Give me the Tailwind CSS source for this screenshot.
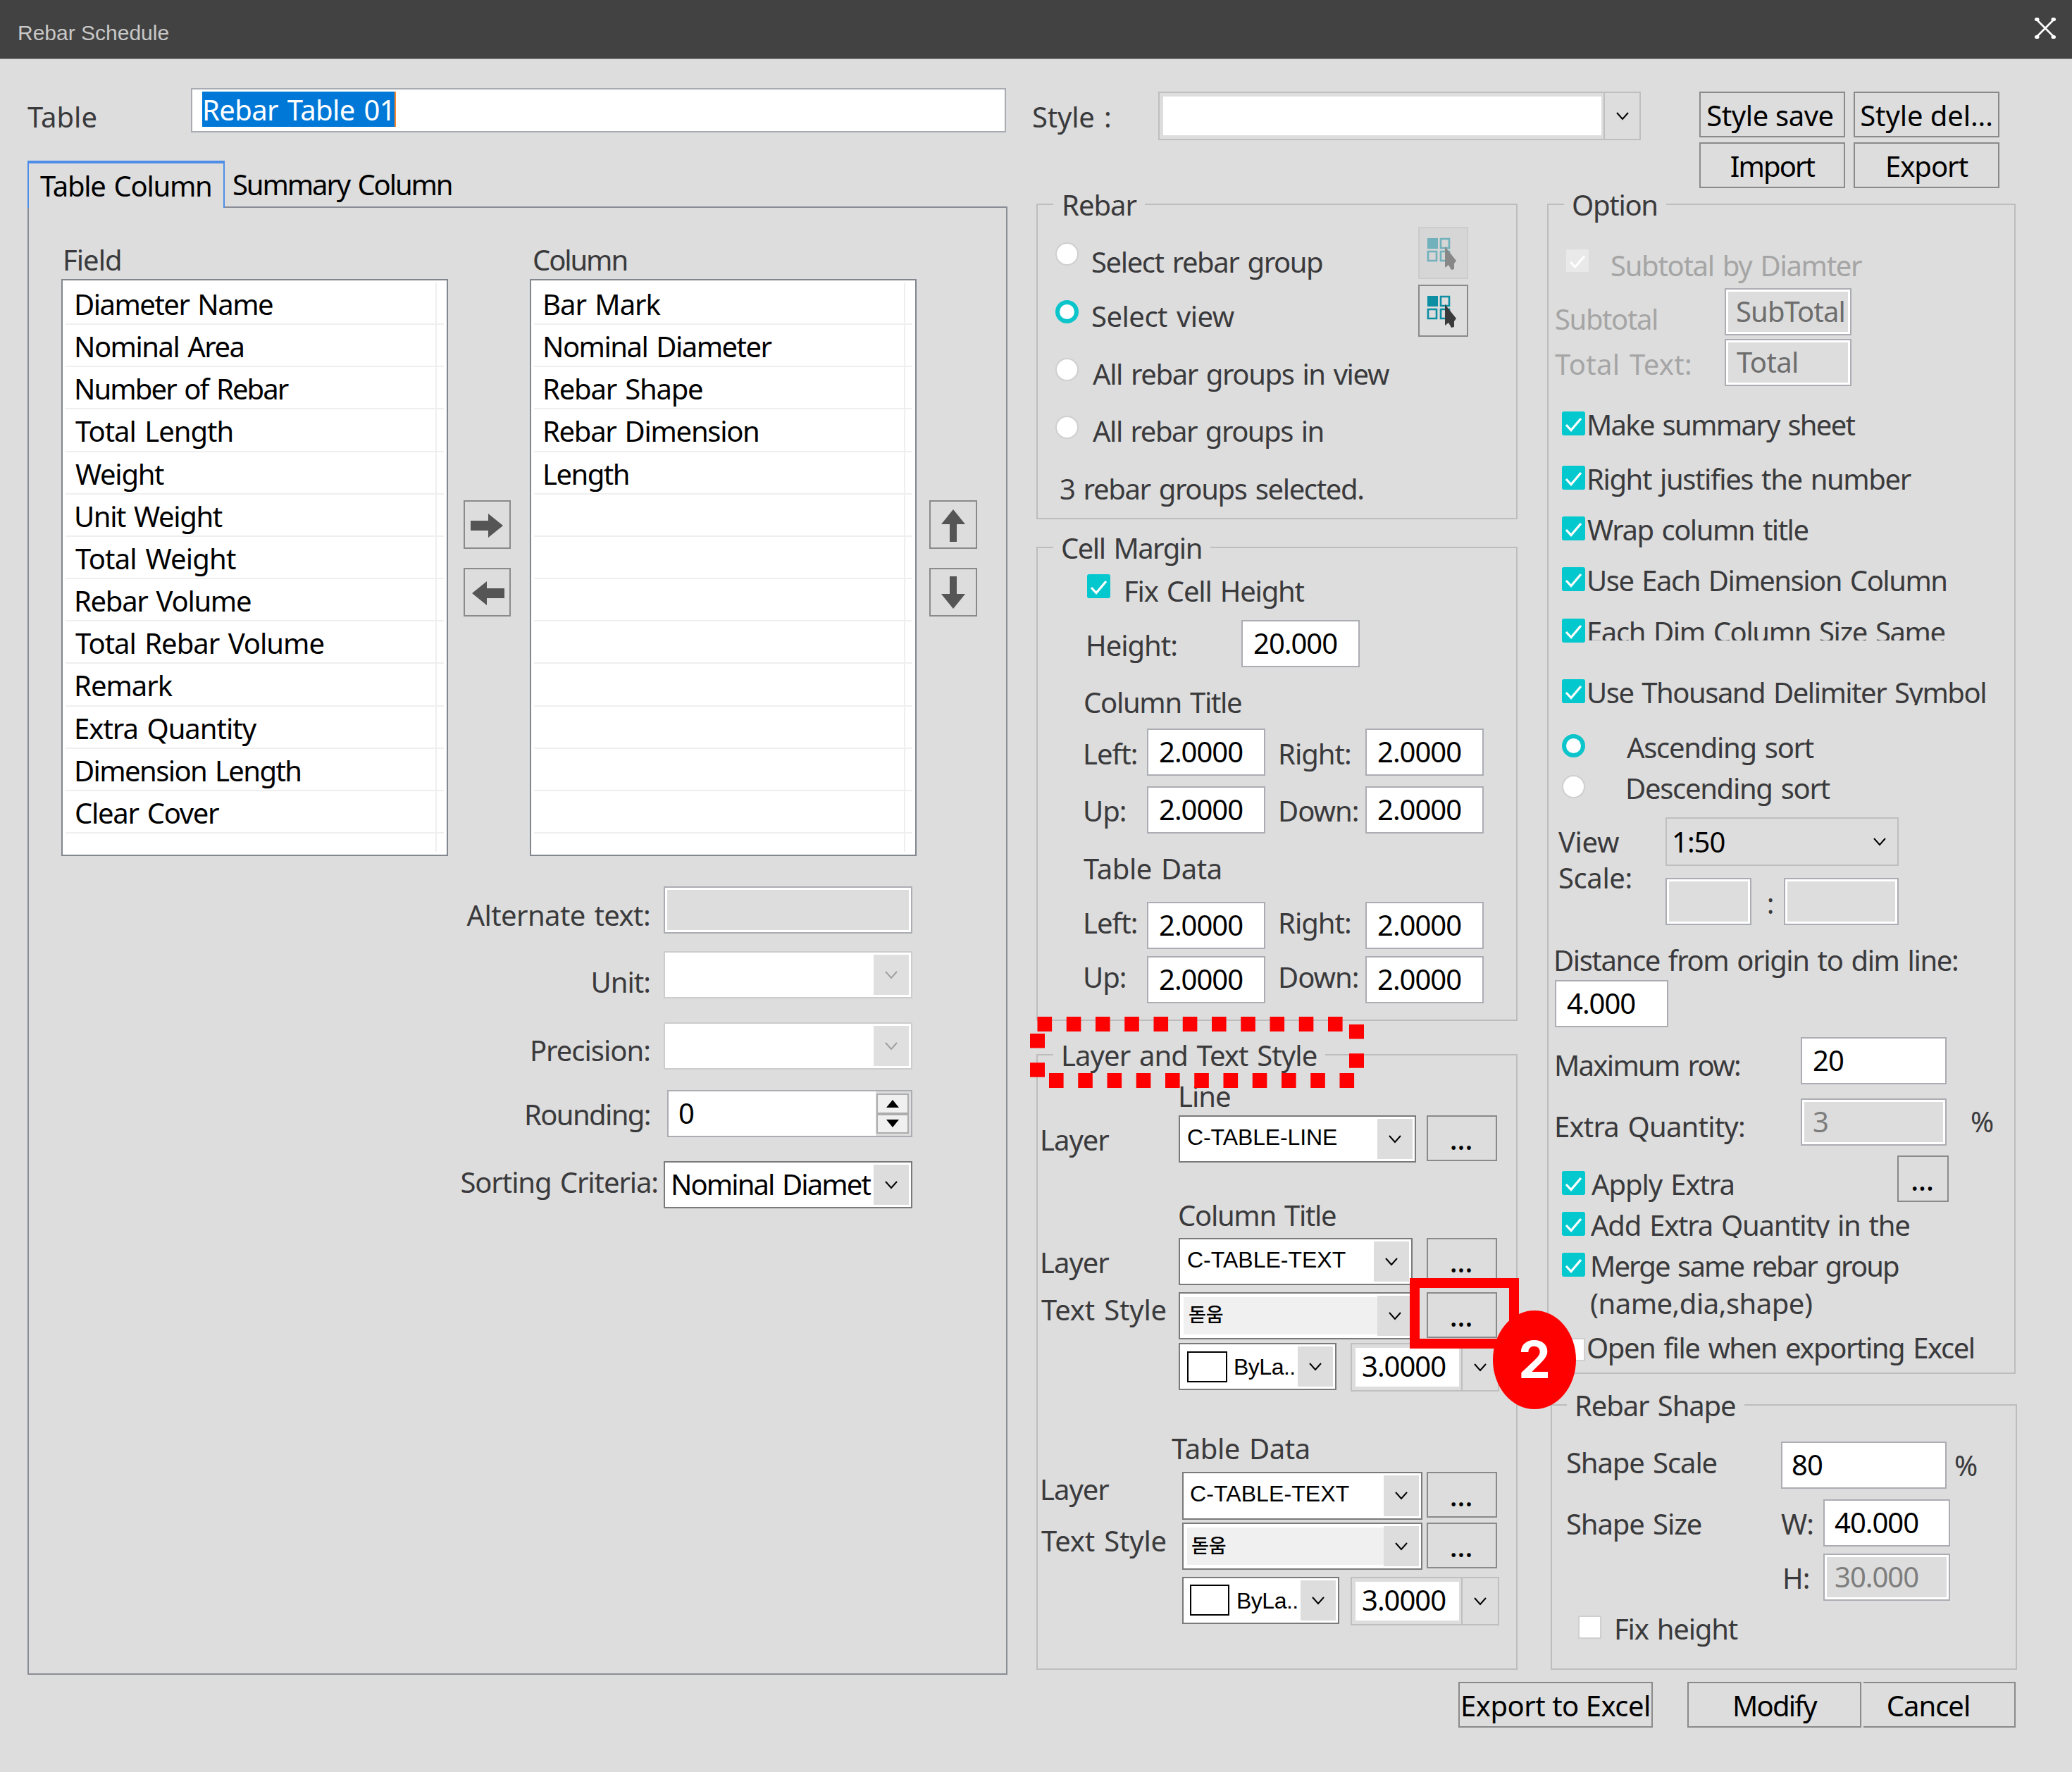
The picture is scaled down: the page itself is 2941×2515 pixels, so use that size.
<!DOCTYPE html>
<html lang="en">
<head>
  <meta charset="UTF-8">
  <meta name="viewport" content="width=device-width, initial-scale=1.0">
  <title>Rebar Schedule</title>
  <script src="https://cdn.jsdelivr.net/npm/@tailwindcss/browser@4"></script>
</head>

<body class="relative w-[2941px] h-[2515px] overflow-hidden bg-[#dddddd] font-['Noto_Sans','Noto_Sans_CJK_KR',sans-serif] text-[40px] leading-[50px] tracking-[-1px] [word-spacing:3px] text-[#3a3a3c] whitespace-nowrap">

  <!-- Shared icons -->
  <svg class="hidden">
    <symbol id="check" viewBox="0 0 33 34"><path d="M6 19l7 7.5L27 10" fill="none" stroke="#fff" stroke-width="3.2"/></symbol>
    <symbol id="chevron" viewBox="0 0 18 12"><path d="M1 1l8 9 8-9" fill="none" stroke="currentColor" stroke-width="2"/></symbol>
    <symbol id="pick" viewBox="0 0 71 74">
      <path d="M13 16h15v15H13z" fill="#0c8ea3"/>
      <path d="M32 17h12v13H32zM14 35h12v13H14zM32 35h12v13H32z" fill="none" stroke="#0c8ea3" stroke-width="2.6"/>
      <path d="M38 28v30l5-4 4 7 4-1v-8l3-4z" fill="#3a3a3a"/>
    </symbol>
  </svg>

  <!-- Title bar -->
  <header class="flex justify-between h-[84px] bg-[#424242] border-b border-[#8a8a8a]">
    <h1 class="ml-[25px] mt-[22px] font-['Liberation_Sans',sans-serif] text-[30px] tracking-[0px] [word-spacing:0px] text-[#c8c8c8]">Rebar Schedule</h1>
    <svg class="w-[32px] h-[32px] mt-[24px] mr-[22px]" viewBox="0 0 32 32" fill="none" stroke="#fff" stroke-width="2.6" stroke-linecap="round">
      <path d="M4 4l24 24M28 4L4 28"/>
      <path d="M3.500 3.500h1.500M27 3.500h1.500M3.500 28.500h1.500M27 28.500h1.500" stroke-width="5"/>
    </svg>
  </header>

  <div class="flex">

    <!-- Left side -->
    <section class="w-[1445px] shrink-0">
      <div class="flex h-[144px]">
        <label class="w-[271px] pl-[39px] mt-[57px] tracking-[0px]">Table</label>
        <div class="mt-[41px] w-[1157px] h-[63px] bg-white border-2 border-[#a9abb3]">
          <span class="block ml-[14px] mt-[3px] w-[275px] h-[50px] leading-[52px] tracking-[-0.6px] bg-[#0078d7] text-white border-r-2 border-[#ff8728]">Rebar Table 01</span>
        </div>
      </div>

      <!-- Tabs -->
      <div class="flex h-[65px] ml-[39px] text-black">
        <div class="relative z-10 w-[280px] h-[67px] bg-[#dddddd] border-t-4 border-x-2 border-[#4f8ee8] pl-[16px] pt-[7px] tracking-[-1.3px]">Table Column</div>
        <div class="pl-[11px] pt-[9px] tracking-[-2.1px]">Summary Column</div>
      </div>

      <div class="ml-[39px] w-[1391px] h-[2084px] border-2 border-[#8a8d96]">
        <div class="flex h-[101px] pl-[48px]">
          <span class="w-[667px] mt-[49px]">Field</span>
          <span class="mt-[49px] tracking-[-2.1px]">Column</span>
        </div>

        <!-- Field / column lists -->
        <div class="flex h-[819px] pl-[46px] text-black">
          <ul class="w-[549px] bg-white border-2 border-[#82868f] px-[4px] pt-[3px] leading-[62px]">
            <li class="h-[60.170px] border-b-2 border-[#efefef]"><div class="w-[527px] h-full pl-[12px] border-r-2 border-[#efefef] tracking-[-1.5px]">Diameter Name</div></li>
            <li class="h-[60.170px] border-b-2 border-[#efefef]"><div class="w-[527px] h-full pl-[12px] border-r-2 border-[#efefef] tracking-[-1.5px]">Nominal Area</div></li>
            <li class="h-[60.170px] border-b-2 border-[#efefef]"><div class="w-[527px] h-full pl-[12px] border-r-2 border-[#efefef] tracking-[-1.9px]">Number of Rebar</div></li>
            <li class="h-[60.170px] border-b-2 border-[#efefef]"><div class="w-[527px] h-full pl-[14px] border-r-2 border-[#efefef]">Total Length</div></li>
            <li class="h-[60.170px] border-b-2 border-[#efefef]"><div class="w-[527px] h-full pl-[14px] border-r-2 border-[#efefef] tracking-[-1.3px]">Weight</div></li>
            <li class="h-[60.170px] border-b-2 border-[#efefef]"><div class="w-[527px] h-full pl-[12px] border-r-2 border-[#efefef] tracking-[-1.4px]">Unit Weight</div></li>
            <li class="h-[60.170px] border-b-2 border-[#efefef]"><div class="w-[527px] h-full pl-[14px] border-r-2 border-[#efefef] tracking-[-0.8px]">Total Weight</div></li>
            <li class="h-[60.170px] border-b-2 border-[#efefef]"><div class="w-[527px] h-full pl-[12px] border-r-2 border-[#efefef] tracking-[-1.3px]">Rebar Volume</div></li>
            <li class="h-[60.170px] border-b-2 border-[#efefef]"><div class="w-[527px] h-full pl-[14px] border-r-2 border-[#efefef]">Total Rebar Volume</div></li>
            <li class="h-[60.170px] border-b-2 border-[#efefef]"><div class="w-[527px] h-full pl-[12px] border-r-2 border-[#efefef]">Remark</div></li>
            <li class="h-[60.170px] border-b-2 border-[#efefef]"><div class="w-[527px] h-full pl-[12px] border-r-2 border-[#efefef]">Extra Quantity</div></li>
            <li class="h-[60.170px] border-b-2 border-[#efefef]"><div class="w-[527px] h-full pl-[12px] border-r-2 border-[#efefef] tracking-[-1.6px]">Dimension Length</div></li>
            <li class="h-[60.170px] border-b-2 border-[#efefef]"><div class="w-[527px] h-full pl-[13px] border-r-2 border-[#efefef] tracking-[-1.3px]">Clear Cover</div></li>
            <li class="h-[26px]"><div class="w-[527px] h-full border-r-2 border-[#efefef]"></div></li>
          </ul>
          <div class="flex flex-col gap-[27px] ml-[22px] mt-[314px] w-[67px]">
            <button class="flex items-center justify-center h-[69px] pr-[2px] pt-[2px] border-2 border-[#8a8a8a]">
              <svg class="w-[46px] h-[34px]" viewBox="0 0 46 34"><path d="M0 10h25V0l21 17-21 17V24H0z" fill="#555"/></svg>
            </button>
            <button class="flex items-center justify-center h-[69px] pl-[3px] pt-[2px] border-2 border-[#8a8a8a]">
              <svg class="w-[46px] h-[34px]" viewBox="0 0 46 34"><path d="M46 10H21V0L0 17l21 17V24h25z" fill="#555"/></svg>
            </button>
          </div>
          <ul class="ml-[27px] w-[549px] bg-white border-2 border-[#82868f] px-[4px] pt-[3px] leading-[62px]">
            <li class="h-[60.170px] border-b-2 border-[#efefef]"><div class="w-[527px] h-full pl-[12px] border-r-2 border-[#efefef]">Bar Mark</div></li>
            <li class="h-[60.170px] border-b-2 border-[#efefef]"><div class="w-[527px] h-full pl-[12px] border-r-2 border-[#efefef] tracking-[-1.5px]">Nominal Diameter</div></li>
            <li class="h-[60.170px] border-b-2 border-[#efefef]"><div class="w-[527px] h-full pl-[12px] border-r-2 border-[#efefef] tracking-[-1.2px]">Rebar Shape</div></li>
            <li class="h-[60.170px] border-b-2 border-[#efefef]"><div class="w-[527px] h-full pl-[12px] border-r-2 border-[#efefef] tracking-[-1.3px]">Rebar Dimension</div></li>
            <li class="h-[60.170px] border-b-2 border-[#efefef]"><div class="w-[527px] h-full pl-[12px] border-r-2 border-[#efefef] tracking-[-1.5px]">Length</div></li>
            <li class="h-[60.170px] border-b-2 border-[#efefef]"><div class="w-[527px] h-full border-r-2 border-[#efefef]"></div></li>
            <li class="h-[60.170px] border-b-2 border-[#efefef]"><div class="w-[527px] h-full border-r-2 border-[#efefef]"></div></li>
            <li class="h-[60.170px] border-b-2 border-[#efefef]"><div class="w-[527px] h-full border-r-2 border-[#efefef]"></div></li>
            <li class="h-[60.170px] border-b-2 border-[#efefef]"><div class="w-[527px] h-full border-r-2 border-[#efefef]"></div></li>
            <li class="h-[60.170px] border-b-2 border-[#efefef]"><div class="w-[527px] h-full border-r-2 border-[#efefef]"></div></li>
            <li class="h-[60.170px] border-b-2 border-[#efefef]"><div class="w-[527px] h-full border-r-2 border-[#efefef]"></div></li>
            <li class="h-[60.170px] border-b-2 border-[#efefef]"><div class="w-[527px] h-full border-r-2 border-[#efefef]"></div></li>
            <li class="h-[60.170px] border-b-2 border-[#efefef]"><div class="w-[527px] h-full border-r-2 border-[#efefef]"></div></li>
            <li class="h-[26px]"><div class="w-[527px] h-full border-r-2 border-[#efefef]"></div></li>
          </ul>
          <div class="flex flex-col gap-[27px] ml-[18px] mt-[314px] w-[68px]">
            <button class="flex items-center justify-center h-[69px] pt-[2px] border-2 border-[#8a8a8a]">
              <svg class="w-[34px] h-[46px]" viewBox="0 0 34 46"><path d="M12 46V21H0L17 0l17 21H22v25z" fill="#555"/></svg>
            </button>
            <button class="flex items-center justify-center h-[69px] border-2 border-[#8a8a8a]">
              <svg class="w-[34px] h-[46px]" viewBox="0 0 34 46"><path d="M12 0v25H0l17 21 17-21H22V0z" fill="#555"/></svg>
            </button>
          </div>
        </div>

        <!-- Column settings -->
        <div class="flex h-[110px]">
          <label class="w-[882px] mt-[59px] text-right tracking-[-0.6px]">Alternate text:</label>
          <div class="ml-[19px] mt-[43px] w-[353px] h-[67px] border-2 border-[#abadb3] shadow-[inset_0_0_0_3px_white]"></div>
        </div>
        <div class="flex h-[92px]">
          <label class="w-[882px] mt-[44px] text-right">Unit:</label>
          <div class="flex justify-end ml-[19px] mt-[25px] w-[353px] h-[67px] p-[3px] bg-white border-2 border-[#cccccc]">
            <span class="flex items-center justify-center w-[50px] bg-[#dfdfdf] text-[#a0a0a0]"><svg class="w-[18px] h-[12px]"><use href="#chevron"/></svg></span>
          </div>
        </div>
        <div class="flex h-[101px]">
          <label class="w-[882px] mt-[49px] text-right">Precision:</label>
          <div class="flex justify-end ml-[19px] mt-[34px] w-[353px] h-[67px] p-[3px] bg-white border-2 border-[#cccccc]">
            <span class="flex items-center justify-center w-[50px] bg-[#dfdfdf] text-[#a0a0a0]"><svg class="w-[18px] h-[12px]"><use href="#chevron"/></svg></span>
          </div>
        </div>
        <div class="flex h-[96px]">
          <label class="w-[882px] mt-[39px] text-right tracking-[-1.6px]">Rounding:</label>
          <div class="flex justify-between ml-[24px] mt-[29px] w-[348px] h-[67px] pl-[14px] bg-white border-2 border-[#abadb3] leading-[62px] text-black">
            0
            <span class="flex flex-col w-[50px] py-[3px] pr-[3px] pl-[1px] bg-[#dddddd]">
              <span class="flex flex-1 items-center justify-center border-2 border-[#adadad] bg-[#f0f0f0]"><svg class="w-[18px] h-[11px]" viewBox="0 0 18 11"><path d="M9 0l9 11H0z"/></svg></span>
              <span class="flex flex-1 items-center justify-center border-2 border-[#adadad] bg-[#f0f0f0]"><svg class="w-[18px] h-[11px]" viewBox="0 0 18 11"><path d="M9 11l9-11H0z"/></svg></span>
            </span>
          </div>
        </div>
        <div class="flex h-[101px]">
          <label class="w-[893px] mt-[39px] text-right tracking-[-1.1px]">Sorting Criteria:</label>
          <div class="flex ml-[8px] mt-[34px] w-[353px] h-[67px] py-[3px] pr-[3px] bg-white border-2 border-[#7a7a7a] text-black">
            <span class="w-[296px] pl-[8px] -mt-[3px] leading-[62px] tracking-[-1.9px]">Nominal Diamet</span>
            <span class="flex items-center justify-center w-[50px] bg-[#dddddd]"><svg class="w-[18px] h-[12px]"><use href="#chevron"/></svg></span>
          </div>
        </div>
      </div>
    </section>

    <!-- Right side -->
    <section class="w-[1496px] shrink-0">
      <div class="flex items-start h-[182px]">
        <label class="w-[199px] pl-[20px] mt-[57px] tracking-[-0.2px]">Style :</label>
        <div class="flex mt-[46px] w-[685px] h-[69px] border-2 border-[#bfbfbf]">
          <span class="w-[630px] border-[5px] border-[#dddddd] border-r-[3px] bg-white"></span>
          <span class="flex flex-1 items-center justify-center border-l-2 border-[#bfbfbf] text-black"><svg class="w-[18px] h-[12px]"><use href="#chevron"/></svg></span>
        </div>
        <div class="grid grid-cols-[207px_207px] gap-x-[12px] gap-y-[7px] ml-[83px] mt-[46px] text-black">
          <button class="h-[65px] border-2 border-[#8a8a8a] pt-[2px] pr-[6px] tracking-[-0.4px]">Style save</button>
          <button class="h-[65px] border-2 border-[#8a8a8a] pt-[2px] tracking-[-0.1px]">Style del...</button>
          <button class="h-[65px] border-2 border-[#8a8a8a] pt-[2px] tracking-[-1.9px]">Import</button>
          <button class="h-[65px] border-2 border-[#8a8a8a] pt-[2px]">Export</button>
        </div>
      </div>

      <div class="flex items-start">
        <div class="ml-[26px] w-[683px]">

          <!-- Rebar -->
          <fieldset class="h-[471px] border-2 border-[#bdbdbd]">
            <legend class="h-[48px] ml-[22px] pl-[12px] pr-[12px]">Rebar</legend>
            <div class="flex">
              <div class="w-[540px]">
                <div class="flex h-[82px] pl-[25px]"><i class="w-[33px] h-[33px] mt-[30px] rounded-full bg-white border-2 border-[#cfcfcf]"></i><span class="ml-[18px] mt-[33px] tracking-[-1.4px]">Select rebar group</span></div>
                <div class="flex h-[82px] pl-[25px]"><i class="w-[33px] h-[33px] mt-[30px] rounded-full bg-white border-[6px] border-[#0bc5cb]"></i><span class="ml-[18px] mt-[28px] tracking-[-0.5px]">Select view</span></div>
                <div class="flex h-[82px] pl-[25px]"><i class="w-[33px] h-[33px] mt-[30px] rounded-full bg-white border-2 border-[#cfcfcf]"></i><span class="ml-[20px] mt-[28px] tracking-[-1.4px]">All rebar groups in view</span></div>
                <div class="flex h-[82px] pl-[25px]"><i class="w-[33px] h-[33px] mt-[30px] rounded-full bg-white border-2 border-[#cfcfcf]"></i><span class="ml-[20px] mt-[27px] tracking-[-1.5px]">All rebar groups in</span></div>
                <p class="ml-[31px] mt-[27px] tracking-[-1.35px]">3 rebar groups selected.</p>
              </div>
              <div class="flex flex-col gap-[8px] mt-[8px] w-[71px]">
                <button class="h-[74px] bg-[#d6d6d6] border-2 border-[#cccccc]"><svg class="-m-[2px] w-[71px] h-[74px] opacity-50"><use href="#pick"/></svg></button>
                <button class="h-[74px] border-2 border-[#8a8a8a]"><svg class="-m-[2px] w-[71px] h-[74px]"><use href="#pick"/></svg></button>
              </div>
            </div>
          </fieldset>

          <!-- Cell margin -->
          <fieldset class="mt-[16px] h-[696px] border-2 border-[#bdbdbd]">
            <legend class="h-[48px] ml-[22px] pl-[11px] pr-[12px] -mt-px tracking-[-1.5px]">Cell Margin</legend>
            <div class="flex h-[64px] pl-[70px]">
              <svg class="w-[33px] h-[34px] mt-[14px] rounded-[3px] bg-[#03c8ce]"><use href="#check"/></svg>
              <span class="ml-[19px] mt-[13px] tracking-[-1.2px]">Fix Cell Height</span>
            </div>
            <div class="flex h-[82px] pl-[68px]">
              <span class="w-[221px] mt-[26px]">Height:</span>
              <div class="mt-[15px] w-[168px] h-[67px] pl-[15px] bg-white border-2 border-[#abadb3] leading-[62px] text-black">20.000</div>
            </div>
            <p class="h-[48px] ml-[65px] mt-[25px] tracking-[-1.3px]">Column Title</p>
            <div class="flex h-[81px] pl-[64px]">
              <span class="w-[91px] mt-[25px]">Left:</span>
              <div class="mt-[14px] w-[168px] h-[67px] pl-[15px] bg-white border-2 border-[#abadb3] leading-[62px] text-black">2.0000</div>
              <span class="ml-[18px] w-[124px] mt-[25px]">Right:</span>
              <div class="mt-[14px] w-[168px] h-[67px] pl-[15px] bg-white border-2 border-[#abadb3] leading-[62px] text-black">2.0000</div>
            </div>
            <div class="flex h-[82px] pl-[64px]">
              <span class="w-[91px] mt-[25px]">Up:</span>
              <div class="mt-[15px] w-[168px] h-[67px] pl-[15px] bg-white border-2 border-[#abadb3] leading-[62px] text-black">2.0000</div>
              <span class="ml-[18px] w-[124px] mt-[25px]">Down:</span>
              <div class="mt-[15px] w-[168px] h-[67px] pl-[15px] bg-white border-2 border-[#abadb3] leading-[62px] text-black">2.0000</div>
            </div>
            <p class="h-[48px] ml-[65px] mt-[25px] tracking-[-0.4px]">Table Data</p>
            <div class="flex h-[91px] pl-[64px]">
              <span class="w-[91px] mt-[29px]">Left:</span>
              <div class="mt-[24px] w-[168px] h-[67px] pl-[15px] bg-white border-2 border-[#abadb3] leading-[62px] text-black">2.0000</div>
              <span class="ml-[18px] w-[124px] mt-[29px]">Right:</span>
              <div class="mt-[24px] w-[168px] h-[67px] pl-[15px] bg-white border-2 border-[#abadb3] leading-[62px] text-black">2.0000</div>
            </div>
            <div class="flex h-[77px] pl-[64px]">
              <span class="w-[91px] mt-[15px]">Up:</span>
              <div class="mt-[10px] w-[168px] h-[67px] pl-[15px] bg-white border-2 border-[#abadb3] leading-[62px] text-black">2.0000</div>
              <span class="ml-[18px] w-[124px] mt-[15px]">Down:</span>
              <div class="mt-[10px] w-[168px] h-[67px] pl-[15px] bg-white border-2 border-[#abadb3] leading-[62px] text-black">2.0000</div>
            </div>
          </fieldset>

          <!-- Layer and text style -->
          <fieldset class="mt-[24px] h-[897px] border-2 border-[#bdbdbd]">
            <legend class="h-[48px] ml-[22px] pl-[11px] pr-[12px] tracking-[-0.9px]">Layer and Text Style</legend>
            <p class="h-[48px] ml-[199px] mt-[10px]">Line</p>
            <div class="flex h-[71px] pl-[3px]">
              <span class="w-[197px] mt-[14px]">Layer</span>
              <div class="flex mt-[4px] w-[337px] h-[67px] pr-[3px] bg-white border-2 border-[#7a7a7a] text-black">
                <span class="flex-1 pl-[10px] font-['Liberation_Sans',sans-serif] text-[32px] leading-[59px] tracking-[-0.1px]">C-TABLE-LINE</span>
                <span class="flex items-center justify-center w-[50px] my-[3px] bg-[#dddddd]"><svg class="w-[18px] h-[12px]"><use href="#chevron"/></svg></span>
              </div>
              <button class="ml-[15px] mt-[4px] w-[100px] h-[65px] pt-[3px] pr-[2px] border-2 border-[#8a8a8a] text-black font-medium tracking-[0px]">...</button>
            </div>
            <p class="h-[48px] ml-[199px] mt-[50px] tracking-[-1.3px]">Column Title</p>
            <div class="flex h-[76px] pl-[3px]">
              <span class="w-[197px] mt-[19px]">Layer</span>
              <div class="flex mt-[9px] w-[332px] h-[67px] pr-[3px] bg-white border-2 border-[#7a7a7a] text-black">
                <span class="flex-1 pl-[10px] font-['Liberation_Sans',sans-serif] text-[32px] leading-[58px] tracking-normal">C-TABLE-TEXT</span>
                <span class="flex items-center justify-center w-[50px] my-[3px] bg-[#dddddd]"><svg class="w-[18px] h-[12px]"><use href="#chevron"/></svg></span>
              </div>
              <button class="ml-[20px] mt-[9px] w-[100px] h-[65px] pt-[3px] pr-[2px] border-2 border-[#8a8a8a] text-black font-medium tracking-[0px]">...</button>
            </div>
            <div class="flex h-[76px] pl-[5px]">
              <span class="w-[195px] mt-[10px] tracking-[-0.2px]">Text Style</span>
              <div class="flex mt-[10px] w-[337px] h-[67px] pr-[3px] bg-white border-2 border-[#7a7a7a] text-black">
                <span class="flex-1 ml-[5px] my-[5px] pl-[7px] bg-[#f0f0f0] font-['Noto_Sans_CJK_KR',sans-serif] font-medium text-[27px] leading-[48px] tracking-normal">돋움</span>
                <span class="flex items-center justify-center w-[50px] my-[3px] bg-[#dddddd]"><svg class="w-[18px] h-[12px]"><use href="#chevron"/></svg></span>
              </div>
              <button class="ml-[15px] mt-[10px] w-[100px] h-[65px] pt-[3px] pr-[2px] border-2 border-[#8a8a8a] text-black font-medium tracking-[0px]">...</button>
            </div>
            <div class="flex h-[75px] pl-[200px] text-black">
              <div class="flex mt-[6px] w-[224px] h-[67px] pr-[3px] bg-white border-2 border-[#7a7a7a]">
                <i class="w-[57px] h-[44px] ml-[10px] mt-[10px] border-2 border-black"></i>
                <span class="flex-1 pl-[9px] font-['Liberation_Sans',sans-serif] text-[32px] leading-[64px] tracking-[-0.5px]">ByLa..</span>
                <span class="flex items-center justify-center w-[50px] my-[3px] bg-[#dddddd]"><svg class="w-[18px] h-[12px]"><use href="#chevron"/></svg></span>
              </div>
              <div class="flex ml-[20px] mt-[6px] w-[211px] h-[69px] border-2 border-[#bfbfbf]">
                <span class="w-[155px] border-[5px] border-r-[3px] border-[#dddddd] bg-white pl-[9px] leading-[52px]">3.0000</span>
                <span class="flex flex-1 items-center justify-center border-l-2 border-[#bfbfbf]"><svg class="w-[18px] h-[12px]"><use href="#chevron"/></svg></span>
              </div>
            </div>
            <p class="h-[48px] ml-[190px] mt-[56px] tracking-[-0.4px]">Table Data</p>
            <div class="flex h-[78px] pl-[3px]">
              <span class="w-[202px] mt-[10px]">Layer</span>
              <div class="flex mt-[10px] w-[341px] h-[68px] pr-[3px] bg-white border-2 border-[#7a7a7a] text-black">
                <span class="flex-1 pl-[9px] font-['Liberation_Sans',sans-serif] text-[32px] leading-[58px] tracking-[0.1px]">C-TABLE-TEXT</span>
                <span class="flex items-center justify-center w-[50px] my-[3px] bg-[#dddddd]"><svg class="w-[18px] h-[12px]"><use href="#chevron"/></svg></span>
              </div>
              <button class="ml-[6px] mt-[10px] w-[100px] h-[65px] pt-[3px] pr-[2px] border-2 border-[#8a8a8a] text-black font-medium tracking-[0px]">...</button>
            </div>
            <div class="flex h-[71px] pl-[5px]">
              <span class="w-[200px] mt-[5px] tracking-[-0.2px]">Text Style</span>
              <div class="flex mt-[4px] w-[341px] h-[67px] pr-[3px] bg-white border-2 border-[#7a7a7a] text-black">
                <span class="flex-1 ml-[5px] my-[5px] pl-[6px] bg-[#f0f0f0] font-['Noto_Sans_CJK_KR',sans-serif] font-medium text-[27px] leading-[49px] tracking-normal">돋움</span>
                <span class="flex items-center justify-center w-[50px] my-[3px] bg-[#dddddd]"><svg class="w-[18px] h-[12px]"><use href="#chevron"/></svg></span>
              </div>
              <button class="ml-[6px] mt-[4px] w-[100px] h-[65px] pt-[3px] pr-[2px] border-2 border-[#8a8a8a] text-black font-medium tracking-[0px]">...</button>
            </div>
            <div class="flex h-[79px] pl-[205px] text-black">
              <div class="flex mt-[10px] w-[223px] h-[67px] pr-[3px] bg-white border-2 border-[#7a7a7a]">
                <i class="w-[56px] h-[44px] ml-[9px] mt-[9px] border-2 border-black"></i>
                <span class="flex-1 pl-[10px] font-['Liberation_Sans',sans-serif] text-[32px] leading-[64px] tracking-[-0.5px]">ByLa..</span>
                <span class="flex items-center justify-center w-[50px] my-[3px] bg-[#dddddd]"><svg class="w-[18px] h-[12px]"><use href="#chevron"/></svg></span>
              </div>
              <div class="flex ml-[16px] mt-[10px] w-[211px] h-[69px] border-2 border-[#bfbfbf]">
                <span class="w-[155px] border-[5px] border-r-[3px] border-[#dddddd] bg-white pl-[9px] leading-[52px]">3.0000</span>
                <span class="flex flex-1 items-center justify-center border-l-2 border-[#bfbfbf]"><svg class="w-[18px] h-[12px]"><use href="#chevron"/></svg></span>
              </div>
            </div>
          </fieldset>
        </div>

        <div class="ml-[42px] w-[667px]">

          <!-- Option -->
          <fieldset class="w-[665px] h-[1684px] border-2 border-[#bdbdbd]">
            <legend class="h-[48px] ml-[22px] pl-[11px] pr-[12px] tracking-[-1.3px]">Option</legend>
            <div class="flex h-[91px] pl-[25px] text-[#a5a5a5]">
              <svg class="w-[32px] h-[32px] mt-[40px] bg-[#e9e9e9]"><use href="#check"/></svg>
              <span class="ml-[31px] mt-[38px] tracking-[-1.3px]">Subtotal by Diamter</span>
            </div>
            <div class="flex h-[71px] pl-[9px] text-[#a5a5a5]">
              <span class="w-[241px] mt-[23px] tracking-[-1.4px]">Subtotal</span>
              <div class="mt-[4px] w-[180px] h-[67px] pl-[14px] border-2 border-[#abadb3] shadow-[inset_0_0_0_3px_white] leading-[62px] tracking-[-0.9px] text-[#6d6d6d]">SubTotal</div>
            </div>
            <div class="flex h-[72px] pl-[9px] text-[#a5a5a5]">
              <span class="w-[241px] mt-[16px] tracking-[0.3px]">Total Text:</span>
              <div class="mt-[5px] w-[180px] h-[67px] pl-[15px] border-2 border-[#abadb3] shadow-[inset_0_0_0_3px_white] leading-[62px] tracking-[-0.6px] text-[#6d6d6d]">Total</div>
            </div>
            <div class="flex h-[48px] mt-[30px] pl-[19px] tracking-[-1.7px]"><svg class="w-[33px] h-[34px] mt-[6px] mr-[2px] rounded-[3px] bg-[#03c8ce]"><use href="#check"/></svg>Make summary sheet</div>
            <div class="flex h-[48px] mt-[29px] pl-[19px] tracking-[-1.4px]"><svg class="w-[33px] h-[34px] mt-[6px] mr-[2px] rounded-[3px] bg-[#03c8ce]"><use href="#check"/></svg>Right justifies the number</div>
            <div class="flex h-[48px] mt-[24px] pl-[19px] tracking-[-1.5px]"><svg class="w-[33px] h-[34px] mt-[6px] mr-[3px] rounded-[3px] bg-[#03c8ce]"><use href="#check"/></svg>Wrap column title</div>
            <div class="flex h-[48px] mt-[24px] pl-[19px] tracking-[-1.5px]"><svg class="w-[33px] h-[34px] mt-[6px] mr-[2px] rounded-[3px] bg-[#03c8ce]"><use href="#check"/></svg>Use Each Dimension Column</div>
            <div class="flex h-[37px] mt-[25px] pl-[19px] tracking-[-1.4px]"><svg class="w-[33px] h-[34px] mt-[6px] mr-[2px] rounded-[3px] bg-[#03c8ce]"><use href="#check"/></svg><span class="h-[37px] overflow-hidden">Each Dim Column Size Same</span></div>
            <div class="flex h-[43px] mt-[49px] pl-[19px] tracking-[-1.5px]"><svg class="w-[33px] h-[34px] mt-[6px] mr-[2px] rounded-[3px] bg-[#03c8ce]"><use href="#check"/></svg><span class="h-[43px] overflow-hidden">Use Thousand Delimiter Symbol</span></div>
            <div class="flex h-[48px] mt-[35px] pl-[19px] tracking-[-1.3px]"><i class="w-[33px] h-[33px] mt-[6px] mr-[59px] rounded-full bg-white border-[6px] border-[#0bc5cb]"></i>Ascending sort</div>
            <div class="flex h-[48px] mt-[10px] pl-[19px] tracking-[-1.3px]"><i class="w-[33px] h-[33px] mt-[6px] mr-[57px] rounded-full bg-white border-2 border-[#cfcfcf]"></i>Descending sort</div>
            <div class="flex h-[171px] pl-[14px]">
              <span class="w-[152px] mt-[27px] leading-[51px] tracking-[-0.4px]">View<br>Scale:</span>
              <div>
                <div class="flex items-center justify-between mt-[18px] w-[331px] h-[69px] pl-[7px] pr-[16px] border-2 border-[#bfbfbf] text-black">
                  1:50
                  <svg class="w-[18px] h-[12px]"><use href="#chevron"/></svg>
                </div>
                <div class="flex mt-[17px]">
                  <div class="w-[122px] h-[67px] border-2 border-[#abadb3] shadow-[inset_0_0_0_3px_white]"></div>
                  <span class="w-[46px] pl-[7px] mt-[11px] text-center">:</span>
                  <div class="w-[163px] h-[67px] border-2 border-[#abadb3] shadow-[inset_0_0_0_3px_white]"></div>
                </div>
              </div>
            </div>
            <p class="h-[48px] ml-[7px] mt-[25px] tracking-[-1.4px]">Distance from origin to dim line:</p>
            <div class="ml-[9px] mt-[5px] w-[161px] h-[67px] pl-[15px] bg-white border-2 border-[#abadb3] leading-[62px] text-black">4.000</div>
            <div class="flex h-[81px] pl-[8px]">
              <span class="w-[350px] mt-[29px] tracking-[-1.7px]">Maximum row:</span>
              <div class="mt-[14px] w-[207px] h-[67px] pl-[15px] bg-white border-2 border-[#abadb3] leading-[62px] text-black">20</div>
            </div>
            <div class="flex h-[87px] pl-[8px]">
              <span class="w-[350px] mt-[35px] tracking-[-0.8px]">Extra Quantity:</span>
              <div class="mt-[20px] w-[207px] h-[67px] pl-[15px] border-2 border-[#abadb3] shadow-[inset_0_0_0_3px_white] leading-[62px] text-[#7d7d7d]">3</div>
              <span class="ml-[34px] mt-[28px] w-[33px] h-[43px]">%</span>
            </div>
            <div class="flex h-[88px] pl-[19px]">
              <svg class="w-[33px] h-[34px] mt-[36px] rounded-[3px] bg-[#03c8ce]"><use href="#check"/></svg>
              <span class="w-[434px] ml-[9px] mt-[30px] tracking-[-1.1px]">Apply Extra</span>
              <button class="mt-[14px] w-[73px] h-[66px] pt-[3px] pr-[2px] border-2 border-[#8a8a8a] text-black font-medium tracking-[0px]">...</button>
            </div>
            <div class="flex h-[43px] pl-[19px]">
              <svg class="w-[33px] h-[34px] mt-[6px] rounded-[3px] bg-[#03c8ce]"><use href="#check"/></svg>
              <span class="ml-[8px] h-[43px] overflow-hidden tracking-[-1.25px]">Add Extra Quantity in the</span>
            </div>
            <div class="flex h-[117px] pl-[19px]">
              <svg class="w-[33px] h-[34px] mt-[21px] rounded-[3px] bg-[#03c8ce]"><use href="#check"/></svg>
              <span class="ml-[7px] mt-[13px] leading-[53px] tracking-[-1.9px]">Merge same rebar group<br><span class="tracking-[-0.5px]">(name,dia,shape)</span></span>
            </div>
            <div class="flex pl-[19px]">
              <i class="w-[33px] h-[33px] mt-[25px] bg-white border-2 border-[#cfcfcf]"></i>
              <span class="ml-[2px] mt-[14px] tracking-[-1.45px]">Open file when exporting Excel</span>
            </div>
          </fieldset>

          <!-- Rebar shape -->
          <fieldset class="ml-[5px] mt-[20px] w-[662px] h-[400px] border-2 border-[#bdbdbd]">
            <legend class="h-[48px] ml-[21px] pl-[11px] pr-[12px] tracking-[-1.1px]">Rebar Shape</legend>
            <div class="flex h-[94px] pl-[20px]">
              <span class="w-[305px] mt-[33px] tracking-[-1.1px]">Shape Scale</span>
              <div class="mt-[28px] w-[235px] h-[67px] pl-[13px] bg-white border-2 border-[#abadb3] leading-[62px] text-black">80</div>
              <span class="ml-[11px] mt-[37px]">%</span>
            </div>
            <div class="flex h-[83px] pl-[20px]">
              <span class="w-[305px] mt-[26px] tracking-[-1.1px]">Shape Size</span>
              <span class="w-[60px] mt-[26px]">W:</span>
              <div class="mt-[16px] w-[180px] h-[67px] pl-[14px] bg-white border-2 border-[#abadb3] leading-[62px] text-black">40.000</div>
            </div>
            <div class="flex h-[76px] pl-[327px]">
              <span class="w-[58px] mt-[20px]">H:</span>
              <div class="mt-[10px] w-[180px] h-[67px] pl-[14px] border-2 border-[#abadb3] shadow-[inset_0_0_0_3px_white] leading-[62px] text-[#7d7d7d]">30.000</div>
            </div>
            <div class="flex pl-[37px]">
              <i class="w-[33px] h-[33px] mt-[22px] bg-white border-2 border-[#cfcfcf]"></i>
              <span class="ml-[18px] mt-[16px] tracking-[-1.2px]">Fix height</span>
            </div>
          </fieldset>
        </div>
      </div>

      <div class="flex mt-[17px] pl-[625px] text-black">
        <button class="w-[276px] h-[65px] pt-[3px] border-2 border-[#8a8a8a] tracking-[-0.5px]">Export to Excel</button>
        <button class="ml-[49px] w-[247px] h-[65px] pt-[3px] border-2 border-[#8a8a8a] tracking-[-1.8px]">Modify</button>
        <button class="ml-[3px] w-[216px] h-[65px] pt-[3px] pr-[30px] border-2 border-l-0 border-[#8a8a8a]">Cancel</button>
      </div>
    </section>
  </div>

  <!-- Callouts -->
  <svg class="absolute left-[1462px] top-[1443px] w-[474px] h-[101px]" viewBox="0 0 474 101" fill="none" stroke="#f00" stroke-width="21">
    <path d="M10.500 10.500H445" stroke-dasharray="20.600 20.650"/>
    <path d="M27 90.500H461" stroke-dasharray="20.600 20.650"/>
    <path d="M10.500 24v62" stroke-dasharray="20.600 20.650"/>
    <path d="M463.500 11v62" stroke-dasharray="20.600 20.650"/>
  </svg>
  <div class="absolute left-[2001px] top-[1814px] w-[155px] h-[100px] border-[14px] border-[#ff0000]"></div>
  <div class="absolute left-[2119px] top-[1860px] w-[118px] h-[140px] flex items-center justify-center rounded-[50%] bg-[#ff0000] font-['Inter',sans-serif] font-bold text-[73px] tracking-normal text-white">2</div>

</body>
</html>
